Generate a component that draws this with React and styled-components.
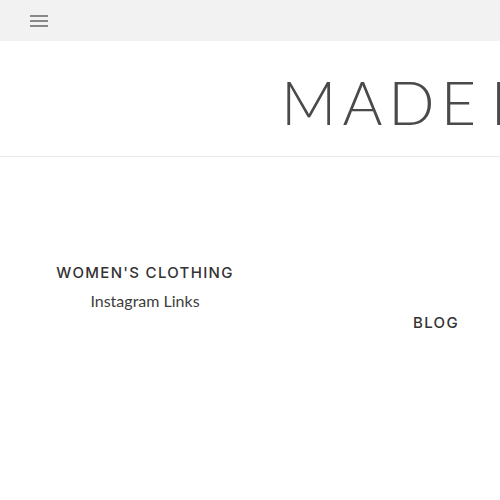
import React from "react";
import styled, { createGlobalStyle } from "styled-components";

const Global = createGlobalStyle`
  html, body { margin: 0; padding: 0; background: #fff; overflow: hidden; }
  body { font-family: "Lato", "Liberation Sans", sans-serif; }
`;

const TopBar = styled.div`
  height: 41px;
  background: #f2f2f2;
  display: flex;
  align-items: center;
  padding-left: 30px;
`;

const Burger = styled.button`
  border: 0;
  background: transparent;
  padding: 0;
  width: 18px;
  height: 12px;
  display: flex;
  flex-direction: column;
  justify-content: space-between;
  margin-top: 1px;
  span {
    display: block;
    height: 2px;
    background: #888;
  }
`;

const Masthead = styled.div`
  height: 115px;
  border-bottom: 1px solid #ebe7ee;
  display: flex;
  align-items: center;
  padding-left: 281px;
  overflow: hidden;
  white-space: nowrap;
`;

const Title = styled.h1`
  margin: 0;
  font-family: "Lato", sans-serif;
  font-weight: 300;
  font-size: 61px;
  letter-spacing: 6px;
  word-spacing: -14px;
  color: #4a4a4a;
  line-height: 1;
  margin-top: 6px;
`;

const Nav = styled.div`
  display: grid;
  grid-template-columns: 290px 1fr;
  padding-top: 106px;
`;

const Col = styled.div`
  display: flex;
  flex-direction: column;
  align-items: center;
  padding-top: ${(p) => p.$top || 0}px;
  padding-left: ${(p) => p.$left || 0}px;
`;

const Heading = styled.a`
  font-family: "Inter", "Open Sans", sans-serif;
  font-weight: 500;
  font-size: 15px;
  letter-spacing: 1.3px;
  color: #333;
  text-transform: uppercase;
  line-height: 20px;
  text-decoration: none;
`;

const SubLink = styled.a`
  font-family: "Lato", sans-serif;
  font-size: 16px;
  font-weight: 400;
  color: #3d3d3d;
  margin-top: 8px;
  line-height: 20px;
  text-decoration: none;
`;

export default function App() {
  return (
    <>
      <Global />
      <TopBar>
        <Burger aria-label="menu">
          <span />
          <span />
          <span />
        </Burger>
      </TopBar>
      <Masthead>
        <Title>MADE BY</Title>
      </Masthead>
      <Nav>
        <Col>
          <Heading>Women's Clothing</Heading>
          <SubLink>Instagram Links</SubLink>
        </Col>
        <Col $top={50} $left={82}>
          <Heading>Blog</Heading>
        </Col>
      </Nav>
    </>
  );
}
